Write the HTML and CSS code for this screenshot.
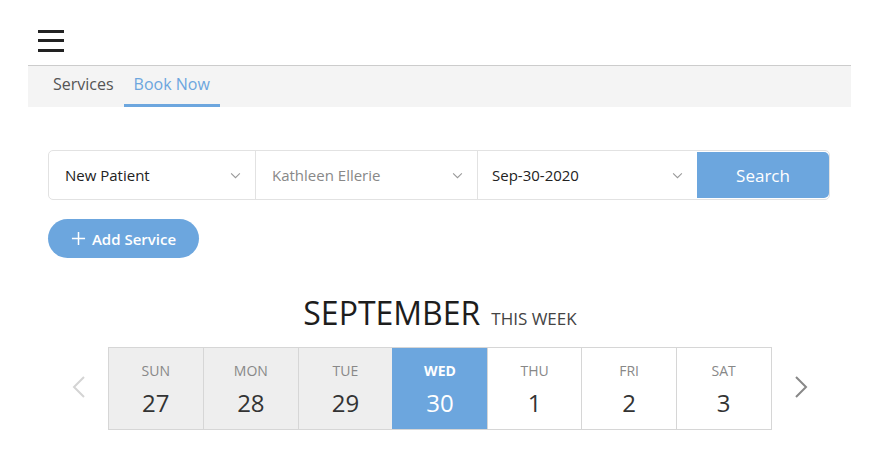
FILE: index.html
```html
<!DOCTYPE html>
<html lang="en">
<head>
  <meta charset="UTF-8">
  <meta name="viewport" content="width=device-width, initial-scale=1.0">
  <title>Book Now</title>
  <link rel="stylesheet" href="styles.css">
</head>
<body>
  <div class="page">
    <div class="topbar">
      <button class="burger" aria-label="Menu">
        <span></span><span></span><span></span>
      </button>
    </div>

    <nav class="tabs">
      <a class="tab">Services</a>
      <a class="tab active">Book Now</a>
    </nav>

    <div class="content">
      <form class="search">
        <div class="field">
          <span class="value">New Patient</span>
          <svg class="chev" viewBox="0 0 12 8" width="11" height="7"><path d="M1 1.5 6 6.5 11 1.5" fill="none" stroke="#999" stroke-width="1.2"/></svg>
        </div>
        <div class="field wide">
          <span class="value muted">Kathleen Ellerie</span>
          <svg class="chev" viewBox="0 0 12 8" width="11" height="7"><path d="M1 1.5 6 6.5 11 1.5" fill="none" stroke="#999" stroke-width="1.2"/></svg>
        </div>
        <div class="field date">
          <span class="value">Sep-30-2020</span>
          <svg class="chev" viewBox="0 0 12 8" width="11" height="7"><path d="M1 1.5 6 6.5 11 1.5" fill="none" stroke="#999" stroke-width="1.2"/></svg>
        </div>
        <button type="button" class="search-btn">Search</button>
      </form>

      <button class="add-btn">
        <svg viewBox="0 0 16 16" width="15" height="15"><path d="M8 1v14M1 8h14" stroke="#fff" stroke-width="1.6"/></svg>
        Add Service
      </button>

      <div class="month">
        <span class="month-name">SEPTEMBER</span>
        <span class="month-sub">THIS WEEK</span>
      </div>

      <div class="week">
        <button class="arrow" aria-label="Previous">
          <svg viewBox="0 0 14 24" width="14" height="24"><path d="M12 2 2 12l10 10" fill="none" stroke="#d4d4d4" stroke-width="2"/></svg>
        </button>
        <div class="days">
          <div class="day past"><span class="dow">SUN</span><span class="num">27</span></div>
          <div class="day past"><span class="dow">MON</span><span class="num">28</span></div>
          <div class="day past"><span class="dow">TUE</span><span class="num">29</span></div>
          <div class="day today"><span class="dow">WED</span><span class="num">30</span></div>
          <div class="day"><span class="dow">THU</span><span class="num">1</span></div>
          <div class="day"><span class="dow">FRI</span><span class="num">2</span></div>
          <div class="day"><span class="dow">SAT</span><span class="num">3</span></div>
        </div>
        <button class="arrow" aria-label="Next">
          <svg viewBox="0 0 14 24" width="14" height="24"><path d="M2 2l10 10L2 22" fill="none" stroke="#888" stroke-width="2"/></svg>
        </button>
      </div>
    </div>
  </div>
</body>
</html>
```

FILE: styles.css
```css
body {
  margin: 0;
  font-family: "Open Sans", "Liberation Sans", sans-serif;
  color: #222;
  background: #fff;
}

.page {
  width: 823px;
  margin-left: 28px;
}

.topbar {
  height: 65px;
  padding-left: 10px;
  display: flex;
  align-items: center;
}

.burger {
  width: 26px;
  height: 22px;
  padding: 0;
  margin-top: 16px;
  border: 0;
  background: none;
  display: flex;
  flex-direction: column;
  justify-content: space-between;
  cursor: pointer;
}

.burger span {
  display: block;
  height: 3px;
  background: #222;
}

.tabs {
  height: 42px;
  border-top: 1px solid #ccc;
  background: #f4f4f4;
  display: flex;
  padding-left: 15px;
  box-sizing: border-box;
}

.tab {
  padding: 0 10px;
  font-size: 16px;
  line-height: 37px;
  color: #555;
  border-bottom: 3px solid transparent;
  cursor: pointer;
}

.tab.active {
  color: #6ca6de;
  border-bottom-color: #6ca6de;
}

.content {
  padding: 43px 20px 0;
}

.search {
  display: flex;
  height: 50px;
  border: 1px solid #e2e2e2;
  border-radius: 5px;
  box-sizing: border-box;
  width: 782px;
}

.field {
  display: flex;
  align-items: center;
  justify-content: space-between;
  padding: 0 14px 0 16px;
  width: 207px;
  box-sizing: border-box;
  border-right: 1px solid #e2e2e2;
  font-size: 15px;
}

.field.wide {
  width: 222px;
}

.field.date {
  width: 219px;
  padding-left: 14px;
  border-right: 0;
}

.value {
  color: #222;
}

.value.muted {
  color: #888;
}

.search-btn {
  flex: 1;
  margin: 1px 0;
  border: 0;
  border-radius: 0 5px 5px 0;
  background: #6ca6de;
  color: #fff;
  font-family: inherit;
  font-size: 17px;
  cursor: pointer;
}

.add-btn {
  margin-top: 19px;
  height: 39px;
  width: 151px;
  border: 0;
  border-radius: 20px;
  background: #6ca6de;
  color: #fff;
  font-family: inherit;
  font-size: 15px;
  font-weight: 600;
  display: flex;
  align-items: center;
  justify-content: center;
  gap: 6px;
  cursor: pointer;
}

.month {
  margin-top: 35px;
  display: flex;
  justify-content: center;
  align-items: baseline;
  gap: 11px;
  padding-left: 1px;
}

.month-name {
  font-size: 32px;
  line-height: 40px;
  color: #1d1d1d;
}

.month-sub {
  font-size: 17px;
  color: #444;
}

.week {
  margin-top: 14px;
  display: flex;
  justify-content: center;
  align-items: center;
  gap: 22px;
}

.arrow {
  border: 0;
  background: none;
  padding: 0;
  width: 14px;
  cursor: pointer;
}

.days {
  display: grid;
  grid-template-columns: repeat(7, 1fr);
  width: 664px;
  box-sizing: border-box;
  border: 1px solid #d6d6d6;
}

.day {
  height: 81px;
  border-left: 1px solid #d6d6d6;
  display: flex;
  flex-direction: column;
  align-items: center;
  padding-top: 13px;
  box-sizing: border-box;
}

.day:first-child {
  border-left: 0;
}

.day.past {
  background: #eee;
}

.dow {
  font-size: 14px;
  color: #888;
}

.num {
  margin-top: 6px;
  font-size: 24px;
  color: #333;
}

.day.today {
  background: #6ca6de;
  border-left-color: #6ca6de;
}

.day.today .dow {
  color: #fff;
  font-weight: 700;
}

.day.today .num {
  color: #fff;
}
```
